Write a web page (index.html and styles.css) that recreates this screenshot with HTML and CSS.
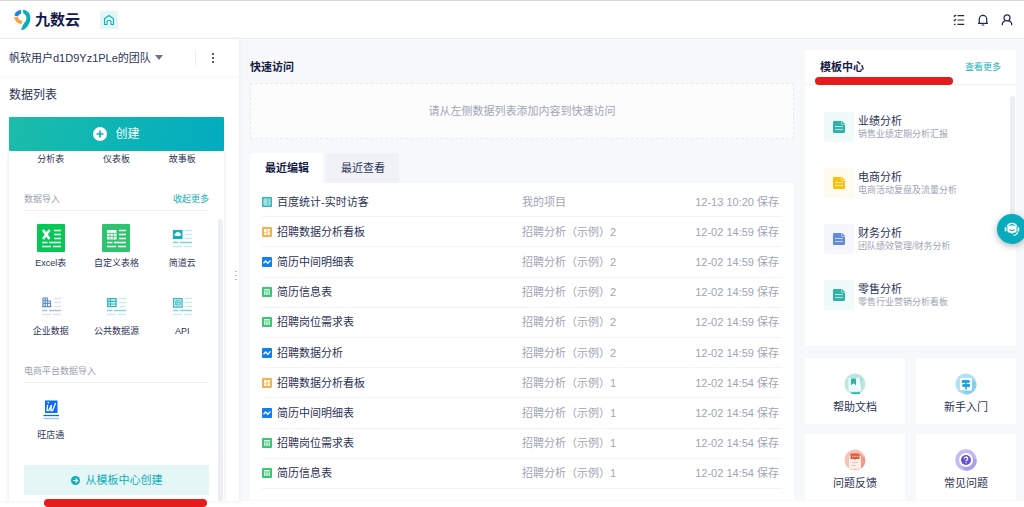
FILE: index.html
```html
<!DOCTYPE html>
<html lang="zh-CN">
<head>
<meta charset="utf-8">
<meta name="viewport" content="width=device-width, initial-scale=1">
<title>九数云</title>
<link rel="stylesheet" href="styles.css">
</head>
<body>
<svg class="sprite" aria-hidden="true">
  <symbol id="i-table" viewBox="0 0 10 10"><rect width="10" height="10" rx="1" fill="#2fb6bf"/><path d="M2 2h6v6H2zM2 4h6M2 6h6M4 2v6" fill="none" stroke="#e2f7f8" stroke-width=".8"/></symbol>
  <symbol id="i-board" viewBox="0 0 10 10"><rect width="10" height="10" rx="1" fill="#f9b04a"/><path d="M2 2h2.600v3.600H2zM5.500 2H8v2.400H5.500zM2 6.300h2.600V8H2zM5.500 5.200H8V8H5.500z" fill="#fff"/></symbol>
  <symbol id="i-chart" viewBox="0 0 10 10"><rect width="10" height="10" rx="1" fill="#0f80f2"/><path d="M1.500 6.300 3.600 4l2.200 2.300L8.500 3.400" fill="none" stroke="#fff" stroke-width="1.300"/></symbol>
  <symbol id="i-sheet" viewBox="0 0 10 10"><rect width="10" height="10" rx="1" fill="#36c873"/><path d="M2 2h6v1.600H2zM2 4.300h1.400V8H2zM4.300 4.300h1.400V8H4.300zM6.600 4.300H8V8H6.600z" fill="#e9fbf0"/></symbol>
  <symbol id="i-doc" viewBox="0 0 12 12"><path d="M1 0h7.500v3.500H12V11a1 1 0 0 1-1 1H1a1 1 0 0 1-1-1V1a1 1 0 0 1 1-1zM9.100 0 12 2.900H9.100z" fill="currentColor"/><path d="M2 5.500h8M2 8.500h8" stroke="#fff" stroke-opacity=".65"/></symbol>
</svg>

<header class="topbar">
  <a class="brand" href="#">
    <svg class="brand-mark" viewBox="0 0 17 21" aria-hidden="true">
      <path d="M7 1C3.500 1.200.900 3.400.400 6.500L4 7.600C4.400 6 5.600 5 7.200 4.800z" fill="#1a86dd"/>
      <path d="M.3 8C.8 12 3.300 14.600 7.600 14.900L8.600 11.800C6 11.600 4.500 10.300 3.900 8z" fill="#f9a33c"/>
      <path d="M8.600.700C13.300.900 16.400 4.200 16.400 8.800c0 5.200-2.800 9.800-6.800 11.900H6.800l3-6.200c1.700-1.600 2.600-3.500 2.600-5.600 0-2.200-1-3.700-2.800-4.200z" fill="#09adb8"/>
    </svg>
    <span>九数云</span>
  </a>
  <a class="home" href="#" aria-label="首页">
    <svg viewBox="0 0 18 18"><path d="M7 13.500H4.500V7.700L9 4.500l4.500 3.200v5.800H11v-2.200a2 2 0 0 0-4 0z" fill="none" stroke="#12b0b8" stroke-width="1.100"/></svg>
  </a>
  <nav class="tools">
    <button type="button" aria-label="任务"><svg viewBox="0 0 12 12"><path d="M4.500 1.700h6.700M4.500 6h6.700M4.500 10.300h6.700M.8 1.700l.7.700L3 .9M.8 6l.7.700L3 5.200M1 10.300h1.500"/></svg></button>
    <button type="button" aria-label="通知"><svg viewBox="0 0 12 12"><path d="M1 9.300h10M2.300 9.200V5a3.700 3.700 0 0 1 7.400 0v4.200M6 .5v.9M4.700 11h2.600"/></svg></button>
    <button type="button" aria-label="账户"><svg viewBox="0 0 12 12"><circle cx="6" cy="3.900" r="3"/><path d="M1.200 11.300c0-2.500 1.500-4.100 3.300-4.600M10.800 11.300c0-2.500-1.500-4.100-3.300-4.600"/></svg></button>
  </nav>
</header>

<div class="layout">
  <aside class="sidebar">
    <div class="team">
      <button type="button" class="team-name">帆软用户d1D9Yz1PLe的团队<i class="caret"></i></button>
      <button type="button" class="team-more" aria-label="更多"><svg viewBox="0 0 4 12"><circle cx="2" cy="2" r="1"/><circle cx="2" cy="6" r="1"/><circle cx="2" cy="10" r="1"/></svg></button>
    </div>
    <h2 class="side-title">数据列表</h2>
    <button type="button" class="create">
      <svg viewBox="0 0 14 14" aria-hidden="true"><circle cx="7" cy="7" r="7" fill="#fff"/><path d="M7 3.500v7M3.500 7h7" stroke="#0fb2b8" stroke-width="1.700"/></svg>
      创建
    </button>
    <div class="drop">
      <div class="tiles names"><a href="#">分析表</a><a href="#">仪表板</a><a href="#">故事板</a></div>
      <div class="section"><span>数据导入</span><a href="#">收起更多</a></div>
      <div class="tiles">
        <a href="#"><svg viewBox="0 0 28 28"><rect width="28" height="28" rx="1" fill="#05c956"/><path d="M6 6l6.500 9M12.500 6 6 15" stroke="#fff" stroke-width="2.600"/><path d="M17 6.500h7M17 10.500h7M17 14.500h7M5 18.500h5.500M12 18.500h12M5 22.500h9M16 22.500h8" stroke="#fff" stroke-width="1.300"/></svg>Excel表</a>
        <a href="#"><svg viewBox="0 0 28 28"><rect width="28" height="28" rx="1" fill="#2ec46f"/><path d="M5 6h9.500v9.500H5z" fill="#fff"/><path d="M5 9.300h9.500M5 12.300h9.500M8 9v6.500M11.300 9v6.500" stroke="#2ec46f" stroke-width=".8"/><path d="M17 6.500h7M17 10.500h7M17 14.500h7M5 18.500h5.500M12 18.500h12M5 22.500h9M16 22.500h8" stroke="#fff" stroke-width="1.300"/></svg>自定义表格</a>
        <a href="#"><svg viewBox="0 0 28 28"><path d="M5 6h9.500v9H5z" fill="#08b4bd"/><path d="M7.500 12a1.500 1.500 0 0 1 .3-2.900 2.200 2.200 0 0 1 4-.2 1.700 1.700 0 0 1 .4 3.100z" fill="#fff"/><path d="M17 6.500h7M17 10.500h7M17 14.500h7M5 22.500h9M16 22.500h8" stroke="#c1edf0" stroke-width="1.300"/><path d="M5 18.500h5.500M12 18.500h12" stroke="#72d4da" stroke-width="1.300"/></svg>简道云</a>
        <a href="#"><svg viewBox="0 0 28 28"><path d="M5 14.700h9.500M6 14V6h4.500v8M10.500 9h3v5.500M8.200 6v8M6 8.500h4.500M6 11.300h7.500" fill="none" stroke="#628bd9" stroke-width="1.200"/><path d="M17 6.500h7M17 10.500h7M17 14.500h7M5 22.500h9M16 22.500h8" stroke="#dae3f7" stroke-width="1.300"/><path d="M5 18.500h5.500M12 18.500h12" stroke="#aac0ec" stroke-width="1.300"/></svg>企业数据</a>
        <a href="#"><svg viewBox="0 0 28 28"><path d="M5.600 6.600h8.500v8H5.600zM5.600 9.300h8.500M5.600 12h8.500M8.400 6.600v8" fill="#e0f6f6" stroke="#2fb6ba" stroke-width="1.200"/><path d="M17 6.500h7M17 10.500h7M17 14.500h7M5 22.500h9M16 22.500h8" stroke="#c8eeee" stroke-width="1.300"/><path d="M5 18.500h5.500M12 18.500h12" stroke="#83d6d8" stroke-width="1.300"/></svg>公共数据源</a>
        <a href="#"><svg viewBox="0 0 28 28"><path d="M5.600 6.600h8.500v8.600H5.600z" fill="#e0f6f6" stroke="#35b9bb" stroke-width="1.200"/><path d="M7.700 8.700h4.500v4.300H7.700zM9 8.700V13M9 10.800h3" fill="none" stroke="#35b9bb" stroke-width=".9"/><path d="M17 6.500h7M17 10.500h7M17 14.500h7M5 22.500h9M16 22.500h8" stroke="#c8eeee" stroke-width="1.300"/><path d="M5 18.500h5.500M12 18.500h12" stroke="#83d6d8" stroke-width="1.300"/></svg>API</a>
      </div>
      <div class="section"><span>电商平台数据导入</span></div>
      <div class="tiles">
        <a href="#"><svg viewBox="0 0 28 28"><path d="M8 4.500h12.500V17H8z" fill="#0a6cf5"/><path d="M10.600 8.700 10 14.500h1.700L14.500 9l-.6 5.500h1.700L18.600 7M10.500 6.600h1.600" fill="none" stroke="#fff" stroke-width="1.300"/><path d="M6.500 19.500h15.500" stroke="#0a6cf5" stroke-width="1.300"/><path d="M6.500 22.500h15.500" stroke="#9dc5fb" stroke-width="1.300"/></svg>旺店通</a>
      </div>
      <a class="from-template" href="#"><svg viewBox="0 0 9 9" aria-hidden="true"><circle cx="4.500" cy="4.500" r="4.500" fill="#0eafb8"/><path d="M2 4.500h4.500M4.600 2.500l2 2-2 2" fill="none" stroke="#fff" stroke-width="1.100"/></svg>从模板中心创建</a>
      <i class="scroll"></i>
    </div>
    <i class="grip"></i>
    <i class="mark mark-side"></i>
  </aside>

  <main class="content">
    <h2 class="heading">快速访问</h2>
    <p class="empty">请从左侧数据列表添加内容到快速访问</p>
    <div class="tabs" role="tablist">
      <button type="button" role="tab" class="tab active" aria-selected="true">最近编辑</button>
      <button type="button" role="tab" class="tab" aria-selected="false">最近查看</button>
    </div>
    <table class="recent">
      <tbody>
        <tr><td><a href="#"><svg><use href="#i-table"/></svg>百度统计-实时访客</a></td><td>我的项目</td><td>12-13 10:20 保存</td></tr>
        <tr><td><a href="#"><svg><use href="#i-board"/></svg>招聘数据分析看板</a></td><td>招聘分析（示例）2</td><td>12-02 14:59 保存</td></tr>
        <tr><td><a href="#"><svg><use href="#i-chart"/></svg>简历中间明细表</a></td><td>招聘分析（示例）2</td><td>12-02 14:59 保存</td></tr>
        <tr><td><a href="#"><svg><use href="#i-sheet"/></svg>简历信息表</a></td><td>招聘分析（示例）2</td><td>12-02 14:59 保存</td></tr>
        <tr><td><a href="#"><svg><use href="#i-sheet"/></svg>招聘岗位需求表</a></td><td>招聘分析（示例）2</td><td>12-02 14:59 保存</td></tr>
        <tr><td><a href="#"><svg><use href="#i-chart"/></svg>招聘数据分析</a></td><td>招聘分析（示例）2</td><td>12-02 14:59 保存</td></tr>
        <tr><td><a href="#"><svg><use href="#i-board"/></svg>招聘数据分析看板</a></td><td>招聘分析（示例）1</td><td>12-02 14:54 保存</td></tr>
        <tr><td><a href="#"><svg><use href="#i-chart"/></svg>简历中间明细表</a></td><td>招聘分析（示例）1</td><td>12-02 14:54 保存</td></tr>
        <tr><td><a href="#"><svg><use href="#i-sheet"/></svg>招聘岗位需求表</a></td><td>招聘分析（示例）1</td><td>12-02 14:54 保存</td></tr>
        <tr><td><a href="#"><svg><use href="#i-sheet"/></svg>简历信息表</a></td><td>招聘分析（示例）1</td><td>12-02 14:54 保存</td></tr>
      </tbody>
    </table>
  </main>

  <aside class="right">
    <section class="templates">
      <div class="templates-head"><h2>模板中心</h2><a href="#">查看更多</a><i class="mark mark-template"></i></div>
      <div class="template-list">
        <a class="template teal" href="#"><span class="thumb"><svg><use href="#i-doc"/></svg></span><span><b>业绩分析</b><small>销售业绩定期分析汇报</small></span></a>
        <a class="template amber" href="#"><span class="thumb"><svg><use href="#i-doc"/></svg></span><span><b>电商分析</b><small>电商活动复盘及流量分析</small></span></a>
        <a class="template blue" href="#"><span class="thumb"><svg><use href="#i-doc"/></svg></span><span><b>财务分析</b><small>团队绩效管理/财务分析</small></span></a>
        <a class="template teal" href="#"><span class="thumb"><svg><use href="#i-doc"/></svg></span><span><b>零售分析</b><small>零售行业营销分析看板</small></span></a>
        <i class="scroll"></i>
      </div>
    </section>
    <nav class="help">
      <a href="#"><svg viewBox="0 0 22 22"><circle cx="11" cy="11" r="10.500" fill="#b9e8e3"/><path d="M15 5h2.500v13.500L15 20z" fill="#97d9d2"/><path d="M4.500 5h11.200l2 13.500H4.500z" fill="#eefaf8"/><path d="M7 5.500h5v6.800l-2.500-2-2.500 2z" fill="#2fb3a6"/><path d="M7 19.300h9v1.700H8z" fill="#2fb3a6"/></svg>帮助文档</a>
      <a href="#"><svg viewBox="0 0 22 22"><circle cx="11" cy="11" r="10.500" fill="#aee0f8"/><path d="M17 6l4.500 4.500c0 6-4 10.500-10 11L5 17z" fill="#85ccef"/><rect x="5" y="5" width="12" height="12.500" rx="1.500" fill="#fff"/><path d="M7 7h7l1.200 1.500L14 10H7zM8 11h7v3H8l-1.200-1.500zM10.200 7h1.600v9.500h-1.600z" fill="#22a3e3"/></svg>新手入门</a>
      <a href="#"><svg viewBox="0 0 22 22"><circle cx="11" cy="11" r="10.500" fill="#fac2b4"/><path d="M16 5l5 4c1 5-1 9-5 11z" fill="#f39a83"/><path d="M5 7h12v13.500l-2-1.300-2 1.600-2-1.600-2 1.600-2-1.600-2 1.100z" fill="#fff0ec"/><path d="M6.500 4.500h9v5.500H12l-1 1-1-1H6.500z" fill="#df5a3b"/><path d="M8 7.300h1.300M10.400 7.300h1.300M12.800 7.300h1.300" stroke="#fff"/><path d="M7.500 13.500h6.500M7.500 16.500h4" stroke="#f6bfae"/></svg>问题反馈</a>
      <a href="#"><svg viewBox="0 0 22 22"><circle cx="11" cy="11" r="10.700" fill="#c3b9f3"/><path d="M16 6l5.700 5.500c0 6-4.500 10.200-10.700 10.200L6 16z" fill="#aa9eea"/><circle cx="11" cy="11" r="7" fill="#fff"/><circle cx="11" cy="11" r="5" fill="#6450cf"/><path d="M9.300 9.800a1.700 1.700 0 1 1 2.500 1.400q-.8.400-.8 1M11 13.200v1.100" fill="none" stroke="#fff" stroke-width="1.300"/></svg>常见问题</a>
    </nav>
  </aside>
</div>
<button type="button" class="support" aria-label="在线客服">
  <svg viewBox="0 0 16 16"><path d="M3 5.500a5.600 5.600 0 0 1 10 0" fill="none" stroke="#fff" stroke-width="1.200"/><path d="M1.600 6.300v4M14.400 6.300v4" stroke="#fff" stroke-width="1.700"/><path d="M5.700 4.500h4.600a2.300 2.300 0 0 1 2.300 2.300v2.700a2.300 2.300 0 0 1-2.300 2.300H9l-1 1.500-1-1.500H5.700a2.300 2.300 0 0 1-2.300-2.300V6.800a2.300 2.300 0 0 1 2.300-2.300z" fill="#fff"/><path d="M5.500 8.500q2.500 2 5 0" fill="none" stroke="#08abbc" stroke-width="1.100"/><path d="M13.800 10.500c-.3 2.200-1.600 3.500-4.300 3.900" fill="none" stroke="#fff" stroke-width="1.200"/></svg>
</button>
</body>
</html>
```
FILE: styles.css
```css
* { box-sizing: border-box; }

body {
  margin: 0;
  min-height: 100vh;
  display: flex;
  flex-direction: column;
  padding-bottom: 6px;
  background: #fff;
  color: #2c3357;
  font: 11px/16px "Liberation Sans", "Noto Sans CJK SC", sans-serif;
  overflow: hidden;
  position: relative;
}

a { color: inherit; text-decoration: none; }
button { border: 0; padding: 0; background: none; color: inherit; font: inherit; }
h2, p { margin: 0; font-size: 11px; }
svg { display: block; flex: none; }
.sprite { position: absolute; width: 0; height: 0; }

.topbar {
  display: flex;
  align-items: center;
  height: 39px;
  padding: 0 11px 0 14px;
  border-top: 1px solid #d6d6d8;
  border-bottom: 1px solid #eceef0;
}
.brand { display: flex; align-items: center; gap: 4px; color: #16194a; font-size: 15px; line-height: 20px; font-weight: 700; }
.brand-mark { width: 17px; height: 21px; }
.home { margin-left: 20px; background: #e3f6f7; }
.home svg { width: 18px; height: 18px; }
.tools { display: flex; gap: 12px; margin-left: auto; }
.tools svg { width: 12px; height: 12px; fill: none; stroke: #22294f; stroke-width: 1.2; }

.layout { flex: 1; display: grid; grid-template-columns: 239px minmax(0, 1fr) 219px; background: #f6f8fa; }

.sidebar { position: relative; display: flex; flex-direction: column; background: #fff; box-shadow: 0 0 4px #e4e8ec; }
.team { display: flex; align-items: center; height: 37px; padding-left: 9px; box-shadow: 0 1px 4px #eff1f3; }
.team-name { display: flex; align-items: center; gap: 4px; flex: 1; }
.caret { border: 4px solid transparent; border-top: 5px solid #6d7287; border-bottom: 0; }
.team-more { display: flex; justify-content: center; align-items: center; width: 34px; height: 16px; margin-right: 10px; border-left: 1px solid #eceef1; }
.team-more svg { width: 4px; height: 12px; fill: #20264d; }
.side-title { padding: 11px 9px 13px; font-size: 12px; line-height: 17px; font-weight: 400; }
.create {
  display: flex;
  align-items: center;
  justify-content: center;
  gap: 8px;
  height: 34px;
  margin: 0 15px 0 9px;
  border-radius: 1px;
  background: linear-gradient(110deg, #1bbda9, #01acc0);
  color: #fff;
  font-size: 12px;
}
.create svg { width: 14px; height: 14px; }

.drop {
  position: relative;
  flex: 1;
  display: flex;
  flex-direction: column;
  margin: 0 15px 0 9px;
  padding: 0 9px;
  box-shadow: 0 0 4px #dfe3e7;
  clip-path: inset(0 -6px);
  color: #2c3357;
  font-size: 9px;
  line-height: 14px;
}
.tiles { display: grid; grid-template-columns: repeat(3, 1fr); row-gap: 22px; padding-top: 13px; }
.tiles a { display: flex; flex-direction: column; align-items: center; gap: 4px; white-space: nowrap; }
.tiles svg { width: 28px; height: 28px; }
.names { padding-top: 1px; }
.section {
  display: flex;
  justify-content: space-between;
  margin: 26px 6px 0;
  padding-bottom: 4px;
  border-bottom: 1px solid #f0f1f3;
  color: #9a9fb0;
}
.section a { color: #12b0ba; }
.from-template {
  display: flex;
  align-items: center;
  justify-content: center;
  gap: 6px;
  height: 30px;
  margin: 23px 6px 0;
  background: #e5f6f7;
  color: #0eafb8;
  font-size: 11px;
}
.from-template svg { width: 9px; height: 9px; }
.scroll { position: absolute; width: 5px; border-radius: 3px; background: #eceef1; }
.drop .scroll { top: 68px; right: 1px; bottom: 0; }
.grip { position: absolute; right: 2px; top: 232px; width: 2px; height: 9px; background: repeating-linear-gradient(#b5bac5 0 1px, transparent 1px 4px); }
.mark { position: absolute; height: 8px; border-radius: 4px; background: #e61b1b; }
.mark-side { left: 44px; bottom: -6px; width: 163px; z-index: 1; }

.content { display: flex; flex-direction: column; padding: 20px 11px 1px; }
.heading, .templates-head h2 { color: #151b46; font-weight: 700; }
.empty { margin: 8px 0 14px; padding: 19px; border: 1px dashed #e8eaee; background: #fcfcfd; color: #a0a5b5; text-align: center; }
.tabs { display: flex; gap: 3px; }
.tab { height: 30px; padding: 0 14px 0 15px; border-radius: 3px 3px 0 0; background: #f0f2f7; }
.tab.active { background: #fff; color: #151b46; font-weight: 700; }

.recent { flex: 1; display: flex; padding: 4px 12px 11px; background: #fff; }
.recent tbody { flex: 1; display: flex; flex-direction: column; }
.recent tr { flex: 1; display: flex; align-items: center; border-bottom: 1px solid #f2f3f5; }
.recent td { padding: 0; color: #a0a5b5; flex: none; width: 25%; }
.recent td:first-child { width: 50%; color: #2c3357; }
.recent td:last-child { padding-right: 3px; text-align: right; }
.recent a { display: flex; align-items: center; gap: 5px; }
.recent svg { width: 10px; height: 10px; }

.right { padding: 11px 8px 1px 0; display: flex; flex-direction: column; gap: 12px; }
.templates { flex: 1; background: #fff; }
.templates-head { position: relative; display: flex; align-items: center; justify-content: space-between; height: 35px; padding: 0 15px; border-bottom: 1px solid #f1f2f4; }
.templates-head a { color: #20b4bd; font-size: 9px; }
.mark-template { left: 10px; top: 27px; width: 138px; }
.template-list { position: relative; display: grid; gap: 26px; padding: 27px 19px; }
.template-list .scroll { top: 11px; right: 1px; height: 140px; }
.template { display: flex; gap: 4px; }
.template b, .template small { display: block; font-weight: 400; }
.template b { font-size: 11px; line-height: 16px; margin-top: 1px; }
.template small { color: #a0a5b5; font-size: 9px; line-height: 10px; white-space: nowrap; }
.thumb { display: grid; place-content: center; width: 30px; height: 30px; }
.thumb svg { width: 12px; height: 12px; }
.teal .thumb { background: #f0faf9; color: #2fb3a6; }
.amber .thumb { background: #fffbee; color: #fbc108; }
.blue .thumb { background: #f5f7fd; color: #628bdc; }
.help { display: grid; grid-template-columns: 1fr 1fr; gap: 10px 11px; }
.help a { display: flex; flex-direction: column; align-items: center; gap: 4px; padding: 15px 0 9px; background: #fff; }
.help svg { width: 22px; height: 22px; }

.support {
  position: absolute;
  right: -3px;
  top: 214px;
  display: grid;
  place-content: center;
  width: 30px;
  height: 30px;
  border-radius: 50%;
  background: #08abbc;
  box-shadow: 0 2px 7px #aab4bc;
}
.support svg { width: 16px; height: 16px; }
```
